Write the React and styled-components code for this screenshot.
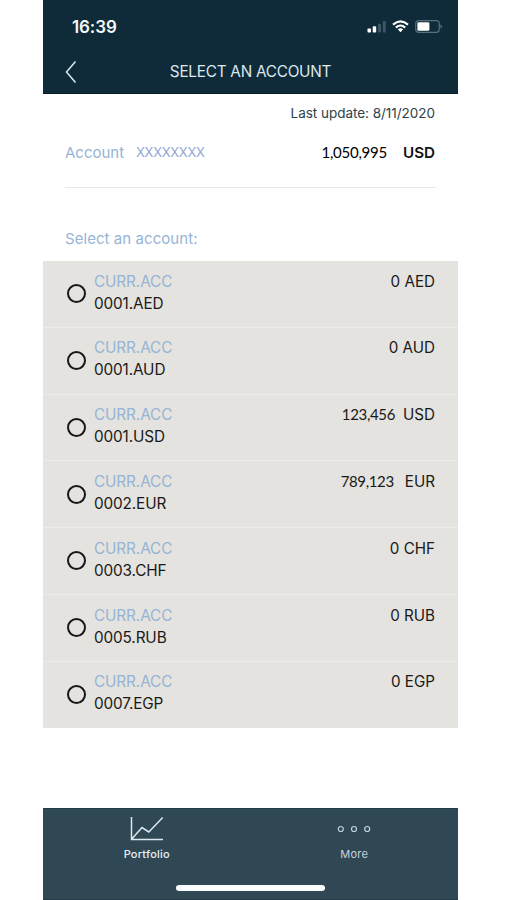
import React from "react";
import styled, { createGlobalStyle } from "styled-components";

const Global = createGlobalStyle`
  * { box-sizing: border-box; }
  body { margin: 0; background: #fff; font-family: Inter, "Liberation Sans", sans-serif; }
`;

const Phone = styled.main`
  display: flex;
  flex-direction: column;
  width: 415px;
  height: 900px;
  margin-left: 43px;
  background: #fff;
  overflow: hidden;
`;

const Header = styled.header`
  height: 94px;
  flex: none;
  background: #0f2b39;
  border-bottom: 1px solid #061e2c;
  color: #dce8ee;
`;

const StatusBar = styled.div`
  display: flex;
  align-items: center;
  justify-content: space-between;
  height: 52px;
  padding: 1px 15px 0 29px;
`;

const Clock = styled.span`
  font-size: 17px;
  font-weight: 600;
  letter-spacing: -0.1px;
  color: #f3f8fa;
`;

const StatusIcons = styled.div`
  display: flex;
  align-items: center;
  gap: 6px;
`;

const TitleBar = styled.div`
  display: grid;
  grid-template-columns: 50px 1fr 50px;
  align-items: center;
  height: 40px;
`;

const BackButton = styled.button`
  display: flex;
  height: 40px;
  padding: 0 0 0 22px;
  align-items: center;
  border: 0;
  background: none;
`;

const Title = styled.h1`
  margin: 0;
  font-size: 15.3px;
  line-height: 20px;
  font-weight: 400;
  letter-spacing: -0.24px;
  text-align: center;
  white-space: nowrap;
`;

const Summary = styled.section`
  height: 94px;
  flex: none;
  margin: 0 22px;
  border-bottom: 1px solid #e9e9e9;
`;

const Updated = styled.p`
  margin: 9px 1px 0 0;
  font-size: 13.5px;
  line-height: 20px;
  letter-spacing: -0.03px;
  text-align: right;
  color: #2d4249;
`;

const SummaryLine = styled.div`
  display: flex;
  align-items: center;
  height: 20px;
  margin-top: 19px;
  padding-right: 1px;
  line-height: 20px;
`;

const AccountLabel = styled.span`
  width: 71px;
  padding-top: 1px;
  font-size: 15px;
  letter-spacing: 0;
  color: #96b4d5;
`;

const AccountMask = styled.span`
  font-size: 13px;
  letter-spacing: -0.3px;
  color: #91a6d5;
`;

const Figure = styled.span`
  font-family: Lato, sans-serif;
  font-size: 15px;
  line-height: 20px;
  letter-spacing: ${(p) => p.$tracking}px;
  margin-left: auto;
  margin-right: ${(p) => p.$gap}px;
`;

const TotalCurrency = styled.strong`
  padding-top: 1px;
  font-size: 15.2px;
  font-weight: 600;
  color: #111;
`;

const Prompt = styled.h2`
  height: 73px;
  flex: none;
  margin: 0;
  padding: 41px 22px 0;
  font-size: 15px;
  line-height: 20px;
  font-weight: 400;
  letter-spacing: 0.06px;
  color: #96b4d5;
`;

const AccountList = styled.ul`
  display: grid;
  grid-template-rows: repeat(6, 66.8px) 66.2px;
  height: 467px;
  flex: none;
  margin: 0;
  padding: 0;
  list-style: none;
  background: #e4e3df;
`;

const AccountRow = styled.li`
  display: flex;
  padding: 9.7px 23px 0 23.5px;
  color: #191919;
  border-bottom: 1px solid #edece9;
  &:last-child { border-bottom-color: #e4e3df; }
`;

const Radio = styled.span`
  flex: none;
  width: 19px;
  height: 19px;
  margin: 13.5px 8.5px 0 0;
  border: 2px solid #171717;
  border-radius: 50%;
`;

const AccountText = styled.div`
  font-size: 15.3px;
  line-height: 22px;
  letter-spacing: -0.12px;
`;

const AccountType = styled.div`
  color: #96b4d5;
  letter-spacing: -0.1px;
`;

const Amount = styled.div`
  display: flex;
  margin-left: auto;
  height: 22px;
  font-size: 15.2px;
  line-height: 22px;
  white-space: pre;
`;

const Footer = styled.footer`
  height: 92px;
  flex: none;
  margin-top: auto;
  background: #304754;
  border-top: 1px solid #223b48;
  border-bottom: 1px solid #253c4c;
`;

const Tabs = styled.nav`
  display: grid;
  grid-template-columns: 1fr 1fr;
  height: 76px;
`;

const Tab = styled.button`
  display: flex;
  flex-direction: column;
  align-items: center;
  padding: 6px 0 0;
  border: 0;
  background: none;
  font-family: inherit;
  font-size: 11px;
  line-height: 16px;
  font-weight: ${(p) => (p.$active ? 500 : 400)};
  letter-spacing: ${(p) => (p.$active ? 0.22 : 0.25)}px;
  color: ${(p) => (p.$active ? "#e5eff5" : "#c6d4dc")};
  svg { margin-bottom: 5px; }
`;

const HomeIndicator = styled.div`
  width: 149px;
  height: 6px;
  margin: 0 auto;
  border-radius: 3px;
  background: #fafdfe;
`;

const accounts = [
  { id: "0001.AED", amount: "0", currency: "AED" },
  { id: "0001.AUD", amount: "0", currency: "AUD" },
  { id: "0001.USD", amount: "123,456", currency: "USD", gap: 8 },
  { id: "0002.EUR", amount: "789,123", currency: "EUR", gap: 11 },
  { id: "0003.CHF", amount: "0", currency: "CHF" },
  { id: "0005.RUB", amount: "0", currency: "RUB" },
  { id: "0007.EGP", amount: "0", currency: "EGP" },
];

const SignalIcon = () => (
  <svg width="19" height="13" viewBox="0 0 19 13">
    <rect x="0.5" y="8.5" width="3.5" height="4" rx="0.8" fill="#fff" />
    <rect x="5.7" y="6.3" width="3.5" height="6.2" rx="0.8" fill="#fff" />
    <rect x="11" y="3.7" width="3" height="8.8" rx="0.8" fill="#3c5665" />
    <rect x="15.8" y="1" width="3" height="11.5" rx="0.8" fill="#3c5665" />
  </svg>
);

const WifiIcon = () => (
  <svg width="17" height="13" viewBox="0 0 17 13" fill="none" stroke="#fff" strokeWidth="2.1">
    <path d="M1 4.6Q8.5-2 16 4.6M3.8 7.6Q8.5 3.4 13.2 7.6" />
    <path d="M5.8 9.2Q8.5 7.1 11.2 9.2L8.5 12.2Z" fill="#fff" stroke="none" />
  </svg>
);

const BatteryIcon = () => (
  <svg width="28" height="13" viewBox="0 0 28 13">
    <rect x="0.7" y="0.7" width="23.6" height="11.6" rx="3.3" fill="none" stroke="#587080" strokeWidth="1.2" />
    <rect x="2.4" y="2.3" width="12" height="8.4" rx="1.3" fill="#fff" />
    <path d="M25.5 4.2Q28.7 6.5 25.5 8.8Z" fill="#587080" />
  </svg>
);

const ChevronIcon = () => (
  <svg width="12" height="24" viewBox="0 0 12 24" fill="none" stroke="#d9e7ee" strokeWidth="1.5">
    <path d="M10.5 1.5L1.5 12L10.5 22.5" />
  </svg>
);

const ChartIcon = () => (
  <svg width="34" height="26" viewBox="0 0 34 26" fill="none" stroke="#dce9ef" strokeWidth="1.5">
    <path d="M1.5 2V24.5H33M2 23.8L12 12.5L18.8 17L32.7 2.5" />
  </svg>
);

const MoreIcon = () => (
  <svg width="34" height="26" viewBox="0 0 34 26" fill="none" stroke="#c2d2db" strokeWidth="1.2">
    <circle cx="3.8" cy="14" r="2.5" />
    <circle cx="17" cy="14" r="2.5" />
    <circle cx="30.2" cy="14" r="2.5" />
  </svg>
);

export default function App() {
  return (
    <>
      <Global />
      <Phone>
        <Header>
          <StatusBar>
            <Clock>16:39</Clock>
            <StatusIcons><SignalIcon /><WifiIcon /><BatteryIcon /></StatusIcons>
          </StatusBar>
          <TitleBar>
            <BackButton aria-label="Back"><ChevronIcon /></BackButton>
            <Title>SELECT AN ACCOUNT</Title>
          </TitleBar>
        </Header>
        <Summary>
          <Updated>Last update: 8/11/2020</Updated>
          <SummaryLine>
            <AccountLabel>Account</AccountLabel>
            <AccountMask>XXXXXXXX</AccountMask>
            <Figure $gap={16} $tracking={-0.25}>1,050,995</Figure>
            <TotalCurrency>USD</TotalCurrency>
          </SummaryLine>
        </Summary>
        <Prompt>Select an account:</Prompt>
        <AccountList>
          {accounts.map((a) => (
            <AccountRow key={a.id}>
              <Radio role="radio" aria-checked="false" />
              <AccountText>
                <AccountType>CURR.ACC</AccountType>
                <div>{a.id}</div>
              </AccountText>
              <Amount>
                {a.gap ? <Figure $gap={a.gap} $tracking={-0.35}>{a.amount}</Figure> : `${a.amount} `}
                {a.currency}
              </Amount>
            </AccountRow>
          ))}
        </AccountList>
        <Footer>
          <Tabs>
            <Tab $active><ChartIcon />Portfolio</Tab>
            <Tab><MoreIcon />More</Tab>
          </Tabs>
          <HomeIndicator />
        </Footer>
      </Phone>
    </>
  );
}
